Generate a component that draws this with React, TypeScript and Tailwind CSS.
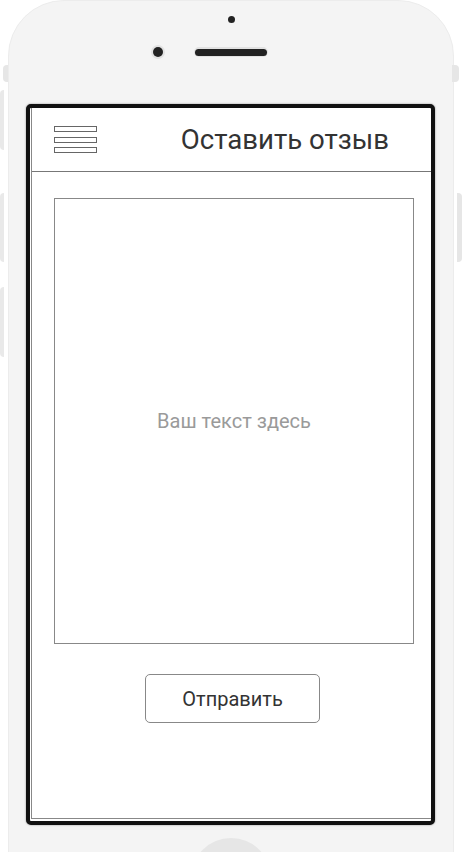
import React from 'react';

export default function App() {
  return (
    <div className="relative w-[462px] h-[852px] overflow-hidden bg-white font-['Roboto',sans-serif]">
      {/* side buttons */}
      <div className="absolute left-[3px] top-[65px] w-[5px] h-[17px] bg-[#e6e6e6] rounded-l-sm" />
      <div className="absolute left-0 top-[90px] w-[4px] h-[60px] bg-[#e9e9e9] rounded-l-sm" />
      <div className="absolute left-0 top-[193px] w-[4px] h-[69px] bg-[#e9e9e9] rounded-l-sm" />
      <div className="absolute left-0 top-[287px] w-[4px] h-[70px] bg-[#e9e9e9] rounded-l-sm" />
      <div className="absolute left-[452px] top-[65px] w-[7px] h-[17px] bg-[#e6e6e6] rounded-r-sm" />
      <div className="absolute left-[457px] top-[193px] w-[5px] h-[69px] bg-[#e6e6e6] rounded-r-sm" />

      {/* phone body */}
      <div className="ml-[8px] w-[446px] h-[920px] bg-[#f4f4f4] rounded-t-[56px] border border-[#ececec] flex flex-col items-center">
        <div className="mt-[15px] w-[7px] h-[7px] rounded-full bg-[#222]" />
        <div className="mt-[22px] flex items-center">
          <div className="w-[14px] h-[14px] rounded-full bg-[#e2e2e2] flex items-center justify-center">
            <div className="w-[10px] h-[10px] rounded-full bg-[#222]" />
          </div>
          <div className="w-[29px]" />
          <div className="w-[74px] h-[10px] rounded-full bg-[#e2e2e2] flex items-center justify-center">
            <div className="w-[72px] h-[7px] rounded-full bg-[#222]" />
          </div>
          <div className="w-[29px]" />
          <div className="w-[14px]" />
        </div>

        {/* screen */}
        <div className="self-start ml-[17px] mt-[45px] w-[409px] h-[721px] border-[4px] border-[#111] rounded-[5px] bg-white shadow-[0_0_2px_rgba(0,0,0,0.45)]">
          <div className="ml-px h-[711px] border-l border-b border-[#888] flex flex-col">
            <div className="h-[64px] border-b border-[#777] flex items-center justify-between pl-[22px] pr-[42px]">
              <div className="flex flex-col gap-[4.5px]">
                <div className="w-[43px] h-[6px] border border-[#666] bg-white" />
                <div className="w-[43px] h-[6px] border border-[#666] bg-white" />
                <div className="w-[43px] h-[6px] border border-[#666] bg-white" />
              </div>
              <h1 className="text-[27.6px] text-[#333] leading-none">Оставить отзыв</h1>
            </div>

            <div className="ml-[22px] mt-[26px] w-[360px] h-[446px] border border-[#888] flex items-center justify-center">
              <span className="text-[20px] text-[#9a9a9a]">Ваш текст здесь</span>
            </div>

            <button className="ml-[113px] mt-[30px] w-[175px] h-[49px] border border-[#888] rounded-[5px] bg-white text-[20px] text-[#333]">
              Отправить
            </button>
          </div>
        </div>

        {/* home button */}
        <div className="mt-[13px] w-[80px] h-[80px] rounded-full bg-[#e6e6e6]" />
      </div>
    </div>
  );
}
